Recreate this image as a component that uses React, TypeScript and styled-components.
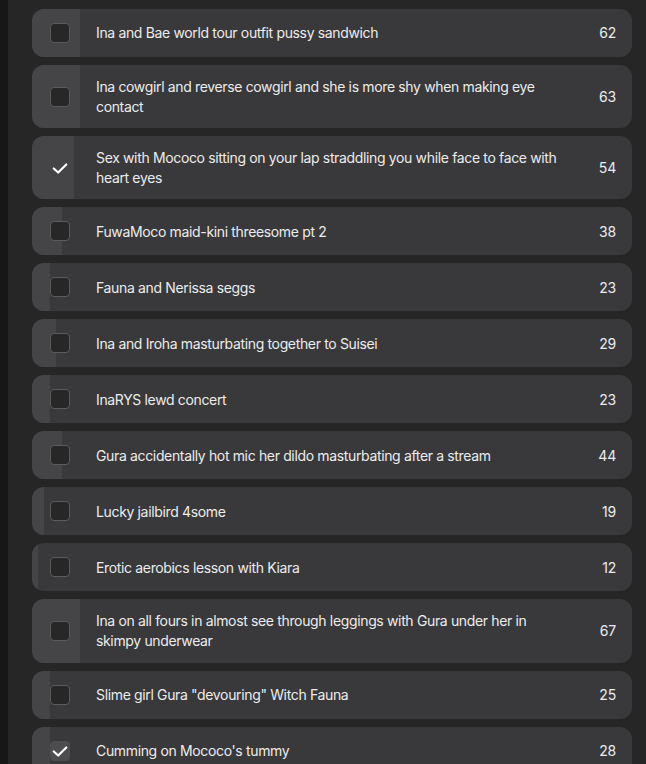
import * as React from "react";
import styled, { createGlobalStyle } from "styled-components";

type Option = {
  label: string;
  votes: number;
  percent: number;
  checked?: boolean;
  hovered?: boolean;
};

const options: Option[] = [
  { label: "Ina and Bae world tour outfit pussy sandwich", votes: 62, percent: 8 },
  {
    label:
      "Ina cowgirl and reverse cowgirl and she is more shy when making eye contact",
    votes: 63,
    percent: 8,
  },
  {
    label:
      "Sex with Mococo sitting on your lap straddling you while face to face with heart eyes",
    votes: 54,
    percent: 7,
    checked: true,
  },
  { label: "FuwaMoco maid-kini threesome pt 2", votes: 38, percent: 5 },
  { label: "Fauna and Nerissa seggs", votes: 23, percent: 3 },
  { label: "Ina and Iroha masturbating together to Suisei", votes: 29, percent: 4 },
  { label: "InaRYS lewd concert", votes: 23, percent: 3 },
  {
    label: "Gura accidentally hot mic her dildo masturbating after a stream",
    votes: 44,
    percent: 5,
  },
  { label: "Lucky jailbird 4some", votes: 19, percent: 2 },
  { label: "Erotic aerobics lesson with Kiara", votes: 12, percent: 1 },
  {
    label:
      "Ina on all fours in almost see through leggings with Gura under her in skimpy underwear",
    votes: 67,
    percent: 8,
  },
  { label: 'Slime girl Gura "devouring" Witch Fauna', votes: 25, percent: 3 },
  {
    label: "Cumming on Mococo's tummy",
    votes: 28,
    percent: 3,
    checked: true,
    hovered: true,
  },
];

function CheckMark() {
  return (
    <svg width="20" height="20" viewBox="0 0 20 20" fill="none">
      <polyline
        points="3,10.5 8,15 17,6"
        stroke="#ffffff"
        strokeWidth="2.4"
        strokeLinecap="round"
        strokeLinejoin="round"
      />
    </svg>
  );
}

function PollRow({ option }: { option: Option }) {
  return (
    <Row>
      <Fill style={{ width: `${option.percent}%` }} />
      <Box $checked={!!option.checked} $hovered={!!option.hovered}>
        {option.checked && <CheckMark />}
      </Box>
      <Label>{option.label}</Label>
      <Count>{option.votes}</Count>
    </Row>
  );
}

export default function App() {
  return (
    <>
      <GlobalStyle />
      <Page>
        <Rail />
        <List>
          {options.map((option) => (
            <PollRow key={option.label} option={option} />
          ))}
        </List>
      </Page>
    </>
  );
}

const GlobalStyle = createGlobalStyle`
  html, body {
    margin: 0;
    padding: 0;
    background: #262626;
    overflow: hidden;
  }
  body {
    font-family: Inter, "Noto Sans", sans-serif;
    -webkit-font-smoothing: antialiased;
  }
`;

const Page = styled.div`
  display: flex;
  min-height: 764px;
  background: #262626;
`;

const Rail = styled.div`
  width: 8px;
  flex-shrink: 0;
  background: #171717;
`;

const List = styled.div`
  flex: 1;
  display: flex;
  flex-direction: column;
  gap: 8px;
  padding: 9px 14px 0 24px;
`;

const Row = styled.div`
  position: relative;
  display: flex;
  align-items: center;
  gap: 26px;
  min-height: 48px;
  box-sizing: border-box;
  padding: 12px 16px 12px 18px;
  background: #39393b;
  border-radius: 12px;
  overflow: hidden;
`;

const Fill = styled.div`
  position: absolute;
  left: 0;
  top: 0;
  bottom: 0;
  background: #454547;
`;

const Box = styled.div<{ $checked: boolean; $hovered: boolean }>`
  position: relative;
  width: 20px;
  height: 20px;
  flex-shrink: 0;
  box-sizing: border-box;
  border-radius: 4px;
  display: flex;
  align-items: center;
  justify-content: center;
  background: ${(p) =>
    p.$checked ? (p.$hovered ? "#4d4d4f" : "transparent") : "#272727"};
  border: 1px solid
    ${(p) => (p.$checked ? (p.$hovered ? "#4d4d4f" : "transparent") : "#5a5a5a")};
`;

const Label = styled.div`
  position: relative;
  flex: 1;
  margin-right: 6px;
  font-size: 14px;
  line-height: 19.6px;
  letter-spacing: -0.35px;
  color: #ececec;
`;

const Count = styled.div`
  position: relative;
  flex-shrink: 0;
  font-size: 14px;
  line-height: 19.6px;
  letter-spacing: -0.2px;
  color: #ececec;
  text-align: right;
`;
